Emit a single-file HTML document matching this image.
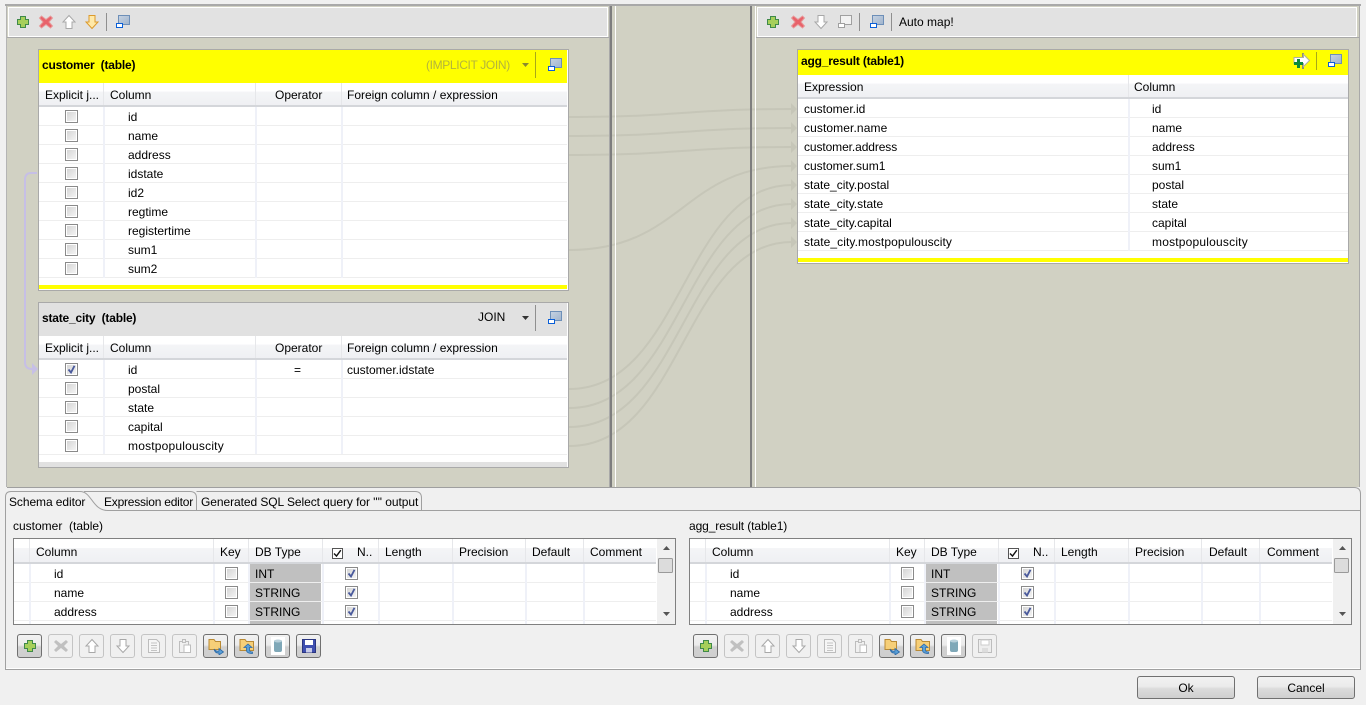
<!DOCTYPE html>
<html><head><meta charset="utf-8"><title>Map</title>
<style>
html,body{margin:0;padding:0;width:1366px;height:705px;overflow:hidden;background:#f0f0f0;font:12px/18px "Liberation Sans",sans-serif;color:#000}
div,svg{position:absolute}
.t{position:absolute;white-space:pre;line-height:18px;height:18px}
.b{font-weight:bold;letter-spacing:-.2px}
.tb{background:#e2e2e2;border:1px solid #fff;box-sizing:border-box}
.box{background:#fff;border:1px solid #a9a9a9;box-sizing:border-box}
.hd{background:linear-gradient(#fff 0,#fff 38%,#f4f5f7 40%,#eff0f3 100%);border-bottom:2px solid #d4d6da;box-sizing:border-box}
.rows{background:repeating-linear-gradient(to bottom,#fff 0,#fff 18px,#eeeeee 18px,#eeeeee 19px)}
.cs{background:#eff1f8;width:2px}
.hs{background:#e6e7ea;width:1px}
.c{width:13px;height:13px;box-sizing:border-box;border:1px solid #8a8a8a;background:linear-gradient(135deg,#d2d2d2,#f7f7f7);box-shadow:inset 0 0 0 1px #fff}
.db{background:#c0c0c0;height:18px}
.btn{width:25px;height:24px;box-sizing:border-box;border:1px solid #707070;border-radius:3px;background:linear-gradient(#f2f2f2,#ebebeb 45%,#d0d0d0 55%,#cfcfcf)}
.dis{border-color:#c4c4c4;background:#f0f0f0}
.bt{width:98px;height:23px;box-sizing:border-box;border:1px solid #707070;border-radius:3px;background:linear-gradient(#f2f2f2,#ebebeb 45%,#dcdcdc 55%,#cfcfcf);text-align:center;line-height:22px}
.sb{background:#f0f0f0}
</style></head><body>
<svg width="0" height="0" style="left:0;top:0">
<defs>
<linearGradient id="wg" x1="0" y1="0" x2="1" y2="1"><stop offset="0" stop-color="#c7d3e2"/><stop offset="1" stop-color="#9fb3cc"/></linearGradient>
<symbol id="plus" viewBox="0 0 16 16"><path d="M5.500 2.500h5v3h3v5h-3v3h-5v-3h-3v-5h3z" fill="#a6cf5a" stroke="#3f8a4a"/></symbol>
<symbol id="x" viewBox="0 0 16 16"><path d="M3.500 2L8 5.500 12.500 2l2 2L11 8l3.500 4-2 2L8 10.500 3.500 14l-2-2L5 8 1.500 4z" fill="#e8626a" stroke="#e79a9a"/></symbol>
<symbol id="up" viewBox="0 0 16 16"><path d="M8 1.500L14 8h-3v6.500H5V8H2z" fill="#fff" stroke="#a8a8a8"/></symbol>
<symbol id="dng" viewBox="0 0 16 16"><path d="M8 14.500L14 8h-3V1.500H5V8H2z" fill="#fff" stroke="#a8a8a8"/></symbol>
<symbol id="dn" viewBox="0 0 16 16"><path d="M8 14.500L14 8h-3V1.500H5V8H2z" fill="#ffe9a8" stroke="#dc9a2c"/></symbol>
<symbol id="win" viewBox="0 0 14 13"><rect x="2.500" y=".5" width="11" height="9" fill="url(#wg)" stroke="#6d8fb8"/><rect x=".5" y="8.500" width="6" height="4" fill="#fff" stroke="#0a5fd8"/></symbol>
<symbol id="wing" viewBox="0 0 14 13"><rect x="2.500" y=".5" width="11" height="9" fill="#f2f2f2" stroke="#a0a0a0"/><rect x=".5" y="8.500" width="6" height="4" fill="#fff" stroke="#a0a0a0"/></symbol>
<symbol id="tick" viewBox="0 0 13 13"><path d="M3.500 6.500L6 9.500 9.500 2.800" fill="none" stroke="#4a5a9c" stroke-width="1.800"/></symbol>
<symbol id="tickb" viewBox="0 0 13 13"><path d="M3 6.500L5.500 9 9.800 3.200" fill="none" stroke="#111" stroke-width="1.400"/></symbol>
<symbol id="xg" viewBox="0 0 16 16"><path d="M3 2l5 4 5-4 2 2-4 4 4 4-2 2-5-4-5 4-2-2 4-4-4-4z" fill="#c0c0c0"/></symbol>
<symbol id="doc" viewBox="0 0 16 16"><path d="M2.500 1.500h8l3 3v10h-11z" fill="#f6f6f6" stroke="#bdbdbd"/><path d="M5 5h6M5 7.500h6M5 10h6M5 12.500h6" stroke="#c4c4c4"/></symbol>
<symbol id="paste" viewBox="0 0 16 16"><path d="M2.500 3.500h9v11h-9z" fill="#f0f0f0" stroke="#bdbdbd"/><path d="M5.500 1.500h3v3h-3z" fill="#eee" stroke="#bdbdbd"/><path d="M7 7h6.500v7.500H7z" fill="#fff" stroke="#bdbdbd"/></symbol>
<symbol id="fo" viewBox="0 0 18 18"><path d="M2 2.500h5l1.500 2h5v8H2z" fill="#f6cf78" stroke="#b98a35"/><path d="M7 12Q9 15 12 14v-2.500l4.500 3.500-4.500 3v-2Q8 16.500 7 12z" fill="#5aa0d8" stroke="#2c6aa8" stroke-width=".8"/></symbol>
<symbol id="fi" viewBox="0 0 18 18"><path d="M2 2.500h5l1.500 2h7v9H2z" fill="#f6cf78" stroke="#b98a35"/><path d="M10 7l4 3.500h-2.500V13q0 2 3 2v1.500q-6 0-6-3.500v-2.500H6z" fill="#5aa0d8" stroke="#2c6aa8" stroke-width=".8"/></symbol>
<symbol id="cyl" viewBox="0 0 16 18"><rect x="1" y="0" width="14" height="18" fill="#fff"/><rect x="4" y="3" width="8" height="12" rx="2" fill="#7fa8b8"/><ellipse cx="8" cy="4" rx="4" ry="1.500" fill="#b8d0da"/></symbol>
<symbol id="sv" viewBox="0 0 16 16"><path d="M1.500 1.500h13v13h-13z" fill="#3f4fb0" stroke="#2a3580"/><rect x="4" y="2" width="8" height="5" fill="#fff"/><rect x="5" y="10" width="6" height="4.500" fill="#c8cce8"/></symbol>
<symbol id="svg" viewBox="0 0 16 16"><path d="M1.500 1.500h13v13h-13z" fill="#eee" stroke="#bdbdbd"/><rect x="4" y="2" width="8" height="5" fill="#fff" stroke="#ccc"/><rect x="5" y="10" width="6" height="4.500" fill="#ddd"/></symbol>
</defs></svg>

<!-- outer frame -->
<div style="left:5px;top:4px;width:1356px;height:2px;background:#a9a9a9"></div>
<div style="left:6px;top:6px;width:1px;height:481px;background:#b4b4b4"></div>
<div style="left:7px;top:6px;width:1352px;height:481px;background:#d1d1c3"></div>
<div style="left:1359px;top:6px;width:1px;height:481px;background:#a9a9a9"></div>

<!-- links -->
<svg style="left:0;top:0" width="1366" height="490" fill="none" stroke="#c6c6b8" stroke-width="2">
<path d="M569 117C683 117 683 109 792 109"/>
<path d="M569 136C683 136 683 128 792 128"/>
<path d="M569 155C683 155 683 147 792 147"/>
<path d="M569 250C683 250 683 166 792 166"/>
<path d="M569 389C683 389 683 185 792 185"/>
<path d="M569 408C683 408 683 204 792 204"/>
<path d="M569 427C683 427 683 223 792 223"/>
<path d="M569 446C683 446 683 242 792 242"/>
<g fill="#c6c6b8" stroke="none">
<path d="M791 103l6 6-6 6zM791 122l6 6-6 6zM791 141l6 6-6 6zM791 160l6 6-6 6zM791 179l6 6-6 6zM791 198l6 6-6 6zM791 217l6 6-6 6zM791 236l6 6-6 6z"/>
</g>
<path d="M37 173H31Q25 173 25 180V362Q25 369 32 369" stroke="#c6bfe6"/>
<path d="M32 363l6 6-6 6z" fill="#c6bfe6" stroke="none"/>
</svg>

<!-- sashes -->
<div style="left:609px;top:6px;width:1px;height:481px;background:#a9a9a9"></div>
<div style="left:610px;top:6px;width:2px;height:481px;background:#7e7e7e"></div>
<div style="left:615px;top:6px;width:1px;height:481px;background:#fff"></div>
<div style="left:750px;top:6px;width:2px;height:481px;background:#7e7e7e"></div>
<div style="left:755px;top:6px;width:1px;height:481px;background:#fff"></div>

<!-- toolbars -->
<div class="tb" style="left:8px;top:7px;width:600px;height:30px"></div>
<div style="left:7px;top:37px;width:602px;height:1px;background:#a9a9a9"></div>
<svg style="left:15px;top:14px" width="16" height="16"><use href="#plus"/></svg>
<svg style="left:38px;top:14px" width="16" height="16"><use href="#x"/></svg>
<svg style="left:61px;top:14px" width="16" height="16"><use href="#up"/></svg>
<svg style="left:84px;top:14px" width="16" height="16"><use href="#dn"/></svg>
<div style="left:106px;top:13px;width:1px;height:18px;background:#8f8f8f"></div>
<svg style="left:116px;top:15px" width="14" height="13"><use href="#win"/></svg>

<div class="tb" style="left:757px;top:7px;width:600px;height:30px"></div>
<div style="left:756px;top:37px;width:603px;height:1px;background:#a9a9a9"></div>
<svg style="left:765px;top:14px" width="16" height="16"><use href="#plus"/></svg>
<svg style="left:790px;top:14px" width="16" height="16"><use href="#x"/></svg>
<svg style="left:813px;top:14px" width="16" height="16"><use href="#dng"/></svg>
<svg style="left:838px;top:15px" width="14" height="13"><use href="#wing"/></svg>
<div style="left:859px;top:13px;width:1px;height:18px;background:#8f8f8f"></div>
<svg style="left:870px;top:15px" width="14" height="13"><use href="#win"/></svg>
<div style="left:891px;top:13px;width:1px;height:18px;background:#8f8f8f"></div>
<div class="t" style="left:899px;top:13px">Auto map!</div>

<!-- customer -->
<div class="box" style="left:38px;top:49px;width:531px;height:242px"></div>
<div style="left:39px;top:50px;width:528px;height:33px;background:#ff0"></div>
<div class="t b" style="left:42px;top:56px">customer  (table)</div>
<div class="t" style="left:426px;top:56px;color:#b4b43c;letter-spacing:-.35px">(IMPLICIT JOIN)</div>
<svg style="left:521px;top:62px" width="9" height="6"><path d="M1 1h7L4.500 5z" fill="#8a8a30"/></svg>
<div style="left:535px;top:52px;width:1px;height:26px;background:#a8a818"></div>
<svg style="left:548px;top:58px" width="14" height="13"><use href="#win"/></svg>
<div class="hd" style="left:39px;top:83px;width:528px;height:24px"></div>
<div class="hs" style="left:103px;top:83px;height:22px"></div><div class="hs" style="left:255px;top:83px;height:22px"></div><div class="hs" style="left:341px;top:83px;height:22px"></div>
<div class="t" style="left:45px;top:86px">Explicit j...</div><div class="t" style="left:110px;top:86px">Column</div><div class="t" style="left:275px;top:86px">Operator</div><div class="t" style="left:347px;top:86px">Foreign column / expression</div>
<div class="rows" style="left:39px;top:107px;width:528px;height:171px"></div>
<div class="cs" style="left:103px;top:107px;height:171px"></div><div class="cs" style="left:255px;top:107px;height:171px"></div><div class="cs" style="left:341px;top:107px;height:171px"></div>
<div style="left:39px;top:285px;width:528px;height:4px;background:#ff0"></div>
<div class="c" style="left:65px;top:110px"></div><div class="c" style="left:65px;top:129px"></div><div class="c" style="left:65px;top:148px"></div><div class="c" style="left:65px;top:167px"></div><div class="c" style="left:65px;top:186px"></div><div class="c" style="left:65px;top:205px"></div><div class="c" style="left:65px;top:224px"></div><div class="c" style="left:65px;top:243px"></div><div class="c" style="left:65px;top:262px"></div>
<div class="t" style="left:128px;top:108px">id</div><div class="t" style="left:128px;top:127px">name</div><div class="t" style="left:128px;top:146px">address</div><div class="t" style="left:128px;top:165px">idstate</div><div class="t" style="left:128px;top:184px">id2</div><div class="t" style="left:128px;top:203px">regtime</div><div class="t" style="left:128px;top:222px">registertime</div><div class="t" style="left:128px;top:241px">sum1</div><div class="t" style="left:128px;top:260px">sum2</div>

<!-- state_city -->
<div class="box" style="left:38px;top:302px;width:531px;height:166px"></div>
<div style="left:39px;top:303px;width:528px;height:33px;background:#e1e1e1"></div>
<div class="t b" style="left:42px;top:309px">state_city  (table)</div>
<div class="t" style="left:478px;top:308px">JOIN</div>
<svg style="left:521px;top:315px" width="9" height="6"><path d="M1 1h7L4.500 5z" fill="#333"/></svg>
<div style="left:535px;top:305px;width:1px;height:26px;background:#8f8f8f"></div>
<svg style="left:548px;top:311px" width="14" height="13"><use href="#win"/></svg>
<div class="hd" style="left:39px;top:336px;width:528px;height:24px"></div>
<div class="hs" style="left:103px;top:336px;height:22px"></div><div class="hs" style="left:255px;top:336px;height:22px"></div><div class="hs" style="left:341px;top:336px;height:22px"></div>
<div class="t" style="left:45px;top:339px">Explicit j...</div><div class="t" style="left:110px;top:339px">Column</div><div class="t" style="left:275px;top:339px">Operator</div><div class="t" style="left:347px;top:339px">Foreign column / expression</div>
<div class="rows" style="left:39px;top:360px;width:528px;height:95px"></div>
<div class="cs" style="left:103px;top:360px;height:94px"></div><div class="cs" style="left:255px;top:360px;height:94px"></div><div class="cs" style="left:341px;top:360px;height:94px"></div>
<div style="left:39px;top:462px;width:528px;height:5px;background:#e1e1e1"></div>
<div class="c" style="left:65px;top:363px"></div><svg style="left:65px;top:363px" width="13" height="13"><use href="#tick"/></svg>
<div class="c" style="left:65px;top:382px"></div><div class="c" style="left:65px;top:401px"></div><div class="c" style="left:65px;top:420px"></div><div class="c" style="left:65px;top:439px"></div>
<div class="t" style="left:128px;top:361px">id</div><div class="t" style="left:128px;top:380px">postal</div><div class="t" style="left:128px;top:399px">state</div><div class="t" style="left:128px;top:418px">capital</div><div class="t" style="left:128px;top:437px;letter-spacing:.2px">mostpopulouscity</div>
<div class="t" style="left:294px;top:361px">=</div><div class="t" style="left:347px;top:361px">customer.idstate</div>

<!-- agg_result -->
<div class="box" style="left:797px;top:49px;width:552px;height:215px"></div>
<div style="left:798px;top:50px;width:550px;height:25px;background:#ff0"></div>
<div class="t b" style="left:801px;top:52px">agg_result (table1)</div>
<svg style="left:1293px;top:52px" width="18" height="18"><path d="M10 1v16" stroke="#8f8f70" stroke-width="2"/><path d="M1 5.500h9.500V2.500L16.500 8.500l-6 6v-3H1z" fill="#fff" stroke="#b0b0a0"/><path d="M4 7h3v3h3v3H7v3H4v-3H1v-3h3z" fill="#0a8a3c"/></svg>
<div style="left:1316px;top:52px;width:1px;height:18px;background:#a8a818"></div>
<svg style="left:1328px;top:54px" width="14" height="13"><use href="#win"/></svg>
<div class="hd" style="left:798px;top:75px;width:550px;height:24px"></div>
<div class="hs" style="left:1128px;top:75px;height:22px"></div>
<div class="t" style="left:804px;top:78px">Expression</div><div class="t" style="left:1134px;top:78px">Column</div>
<div class="rows" style="left:798px;top:99px;width:550px;height:152px"></div>
<div class="cs" style="left:1128px;top:99px;height:152px"></div>
<div style="left:798px;top:258px;width:550px;height:4px;background:#ff0"></div>
<div class="t" style="left:804px;top:100px">customer.id</div><div class="t" style="left:804px;top:119px;letter-spacing:.1px">customer.name</div><div class="t" style="left:804px;top:138px;letter-spacing:-.1px">customer.address</div><div class="t" style="left:804px;top:157px">customer.sum1</div><div class="t" style="left:804px;top:176px">state_city.postal</div><div class="t" style="left:804px;top:195px">state_city.state</div><div class="t" style="left:804px;top:214px">state_city.capital</div><div class="t" style="left:804px;top:233px;letter-spacing:.08px">state_city.mostpopulouscity</div>
<div class="t" style="left:1152px;top:100px">id</div><div class="t" style="left:1152px;top:119px">name</div><div class="t" style="left:1152px;top:138px">address</div><div class="t" style="left:1152px;top:157px">sum1</div><div class="t" style="left:1152px;top:176px">postal</div><div class="t" style="left:1152px;top:195px">state</div><div class="t" style="left:1152px;top:214px">capital</div><div class="t" style="left:1152px;top:233px;letter-spacing:.2px">mostpopulouscity</div>

<!-- tab folder -->
<svg style="left:0;top:485px" width="1366" height="190" fill="none" stroke="#a0a0a0">
<path d="M7 2.500H1354Q1360.500 2.500 1360.500 9V25.500" stroke="#9f9f9f"/>
<path d="M5.500 184.500V12Q5.500 6.500 11 6.500H80C92 6.500 92 25.500 108 25.500H1360.500V184.500H5.500z"/>
<path d="M84 6.500H190Q196.500 6.500 196.500 13V25M196.500 6.500H415Q421.500 6.500 421.500 13V25"/>
<path d="M6 183.500H1360" stroke="#fff"/>
</svg>
<div class="t" style="left:9px;top:493px;letter-spacing:-.08px">Schema editor</div>
<div class="t" style="left:104px;top:493px;letter-spacing:-.22px">Expression editor</div>
<div class="t" style="left:201px;top:493px;letter-spacing:-.07px">Generated SQL Select query for '''' output</div>

<div class="t" style="left:13px;top:517px">customer  (table)</div>
<div class="t" style="left:689px;top:517px;letter-spacing:-.1px">agg_result (table1)</div>

<!-- left schema -->
<div style="left:13px;top:538px;width:663px;height:87px;box-sizing:border-box;border:1px solid #808080;background:#fff"></div>
<div class="hd" style="left:14px;top:539px;width:642px;height:25px"></div>
<div class="hs" style="left:29px;top:539px;height:23px"></div><div class="hs" style="left:213px;top:539px;height:23px"></div><div class="hs" style="left:248px;top:539px;height:23px"></div><div class="hs" style="left:322px;top:539px;height:23px"></div><div class="hs" style="left:378px;top:539px;height:23px"></div><div class="hs" style="left:452px;top:539px;height:23px"></div><div class="hs" style="left:525px;top:539px;height:23px"></div><div class="hs" style="left:583px;top:539px;height:23px"></div>
<div class="t" style="left:36px;top:543px">Column</div><div class="t" style="left:220px;top:543px">Key</div><div class="t" style="left:255px;top:543px">DB Type</div><div class="t" style="left:357px;top:543px">N..</div><div class="t" style="left:385px;top:543px">Length</div><div class="t" style="left:459px;top:543px">Precision</div><div class="t" style="left:532px;top:543px">Default</div><div class="t" style="left:590px;top:543px">Comment</div>
<div style="left:332px;top:548px;width:11px;height:11px;box-sizing:border-box;border:1px solid #555;background:#fff"></div><svg style="left:331px;top:547px" width="13" height="13"><use href="#tickb"/></svg>
<div class="rows" style="left:14px;top:564px;width:642px;height:60px"></div>
<div class="cs" style="left:29px;top:564px;height:60px"></div><div class="cs" style="left:213px;top:564px;height:60px"></div><div class="cs" style="left:248px;top:564px;height:60px"></div><div class="cs" style="left:322px;top:564px;height:60px"></div><div class="cs" style="left:378px;top:564px;height:60px"></div><div class="cs" style="left:452px;top:564px;height:60px"></div><div class="cs" style="left:525px;top:564px;height:60px"></div><div class="cs" style="left:583px;top:564px;height:60px"></div>
<div class="db" style="left:250px;top:564px;width:71px"></div><div class="db" style="left:250px;top:583px;width:71px"></div><div class="db" style="left:250px;top:602px;width:71px"></div><div class="db" style="left:250px;top:621px;width:71px;height:3px"></div>
<div class="t" style="left:54px;top:565px">id</div><div class="t" style="left:54px;top:584px">name</div><div class="t" style="left:54px;top:603px">address</div>
<div class="t" style="left:255px;top:565px">INT</div><div class="t" style="left:255px;top:584px">STRING</div><div class="t" style="left:255px;top:603px">STRING</div>
<div class="c" style="left:225px;top:567px"></div><div class="c" style="left:225px;top:586px"></div><div class="c" style="left:225px;top:605px"></div>
<div class="c" style="left:345px;top:567px"></div><svg style="left:345px;top:567px" width="13" height="13"><use href="#tick"/></svg>
<div class="c" style="left:345px;top:586px"></div><svg style="left:345px;top:586px" width="13" height="13"><use href="#tick"/></svg>
<div class="c" style="left:345px;top:605px"></div><svg style="left:345px;top:605px" width="13" height="13"><use href="#tick"/></svg>
<div class="sb" style="left:657px;top:539px;width:18px;height:85px"></div>
<svg style="left:657px;top:539px" width="18" height="85"><path d="M6 11h7l-3.500-4zM6 73h7l-3.500 4z" fill="#555"/><rect x="1.500" y="19.500" width="14" height="14" rx="1" fill="#dcdcdc" stroke="#9a9a9a"/></svg>

<!-- right schema -->
<div style="left:689px;top:538px;width:663px;height:87px;box-sizing:border-box;border:1px solid #808080;background:#fff"></div>
<div class="hd" style="left:690px;top:539px;width:642px;height:25px"></div>
<div class="hs" style="left:705px;top:539px;height:23px"></div><div class="hs" style="left:889px;top:539px;height:23px"></div><div class="hs" style="left:924px;top:539px;height:23px"></div><div class="hs" style="left:998px;top:539px;height:23px"></div><div class="hs" style="left:1054px;top:539px;height:23px"></div><div class="hs" style="left:1128px;top:539px;height:23px"></div><div class="hs" style="left:1201px;top:539px;height:23px"></div><div class="hs" style="left:1259px;top:539px;height:23px"></div>
<div class="t" style="left:712px;top:543px">Column</div><div class="t" style="left:896px;top:543px">Key</div><div class="t" style="left:931px;top:543px">DB Type</div><div class="t" style="left:1033px;top:543px">N..</div><div class="t" style="left:1061px;top:543px">Length</div><div class="t" style="left:1135px;top:543px">Precision</div><div class="t" style="left:1209px;top:543px">Default</div><div class="t" style="left:1267px;top:543px">Comment</div>
<div style="left:1008px;top:548px;width:11px;height:11px;box-sizing:border-box;border:1px solid #555;background:#fff"></div><svg style="left:1007px;top:547px" width="13" height="13"><use href="#tickb"/></svg>
<div class="rows" style="left:690px;top:564px;width:642px;height:60px"></div>
<div class="cs" style="left:705px;top:564px;height:60px"></div><div class="cs" style="left:889px;top:564px;height:60px"></div><div class="cs" style="left:924px;top:564px;height:60px"></div><div class="cs" style="left:998px;top:564px;height:60px"></div><div class="cs" style="left:1054px;top:564px;height:60px"></div><div class="cs" style="left:1128px;top:564px;height:60px"></div><div class="cs" style="left:1201px;top:564px;height:60px"></div><div class="cs" style="left:1259px;top:564px;height:60px"></div>
<div class="db" style="left:926px;top:564px;width:71px"></div><div class="db" style="left:926px;top:583px;width:71px"></div><div class="db" style="left:926px;top:602px;width:71px"></div><div class="db" style="left:926px;top:621px;width:71px;height:3px"></div>
<div class="t" style="left:730px;top:565px">id</div><div class="t" style="left:730px;top:584px">name</div><div class="t" style="left:730px;top:603px">address</div>
<div class="t" style="left:931px;top:565px">INT</div><div class="t" style="left:931px;top:584px">STRING</div><div class="t" style="left:931px;top:603px">STRING</div>
<div class="c" style="left:901px;top:567px"></div><div class="c" style="left:901px;top:586px"></div><div class="c" style="left:901px;top:605px"></div>
<div class="c" style="left:1021px;top:567px"></div><svg style="left:1021px;top:567px" width="13" height="13"><use href="#tick"/></svg>
<div class="c" style="left:1021px;top:586px"></div><svg style="left:1021px;top:586px" width="13" height="13"><use href="#tick"/></svg>
<div class="c" style="left:1021px;top:605px"></div><svg style="left:1021px;top:605px" width="13" height="13"><use href="#tick"/></svg>
<div class="sb" style="left:1333px;top:539px;width:18px;height:85px"></div>
<svg style="left:1333px;top:539px" width="18" height="85"><path d="M6 11h7l-3.500-4zM6 73h7l-3.500 4z" fill="#555"/><rect x="1.500" y="19.500" width="14" height="14" rx="1" fill="#dcdcdc" stroke="#9a9a9a"/></svg>

<!-- left buttons -->
<div class="btn" style="left:17px;top:634px"><svg style="left:4px;top:3px" width="16" height="16"><use href="#plus"/></svg></div>
<div class="btn dis" style="left:48px;top:634px"><svg style="left:4px;top:3px" width="16" height="16"><use href="#xg"/></svg></div>
<div class="btn dis" style="left:79px;top:634px"><svg style="left:4px;top:3px" width="16" height="16"><use href="#up"/></svg></div>
<div class="btn dis" style="left:110px;top:634px"><svg style="left:4px;top:3px" width="16" height="16"><use href="#dng"/></svg></div>
<div class="btn dis" style="left:141px;top:634px"><svg style="left:4px;top:3px" width="16" height="16"><use href="#doc"/></svg></div>
<div class="btn dis" style="left:172px;top:634px"><svg style="left:4px;top:3px" width="16" height="16"><use href="#paste"/></svg></div>
<div class="btn" style="left:203px;top:634px"><svg style="left:3px;top:2px" width="18" height="18"><use href="#fo"/></svg></div>
<div class="btn" style="left:234px;top:634px"><svg style="left:3px;top:2px" width="18" height="18"><use href="#fi"/></svg></div>
<div class="btn" style="left:265px;top:634px"><svg style="left:4px;top:2px" width="16" height="18"><use href="#cyl"/></svg></div>
<div class="btn" style="left:296px;top:634px"><svg style="left:4px;top:3px" width="16" height="16"><use href="#sv"/></svg></div>

<!-- right buttons -->
<div class="btn" style="left:693px;top:634px"><svg style="left:4px;top:3px" width="16" height="16"><use href="#plus"/></svg></div>
<div class="btn dis" style="left:724px;top:634px"><svg style="left:4px;top:3px" width="16" height="16"><use href="#xg"/></svg></div>
<div class="btn dis" style="left:755px;top:634px"><svg style="left:4px;top:3px" width="16" height="16"><use href="#up"/></svg></div>
<div class="btn dis" style="left:786px;top:634px"><svg style="left:4px;top:3px" width="16" height="16"><use href="#dng"/></svg></div>
<div class="btn dis" style="left:817px;top:634px"><svg style="left:4px;top:3px" width="16" height="16"><use href="#doc"/></svg></div>
<div class="btn dis" style="left:848px;top:634px"><svg style="left:4px;top:3px" width="16" height="16"><use href="#paste"/></svg></div>
<div class="btn" style="left:879px;top:634px"><svg style="left:3px;top:2px" width="18" height="18"><use href="#fo"/></svg></div>
<div class="btn" style="left:910px;top:634px"><svg style="left:3px;top:2px" width="18" height="18"><use href="#fi"/></svg></div>
<div class="btn" style="left:941px;top:634px"><svg style="left:4px;top:2px" width="16" height="18"><use href="#cyl"/></svg></div>
<div class="btn dis" style="left:972px;top:634px"><svg style="left:4px;top:3px" width="16" height="16"><use href="#svg"/></svg></div>

<div class="bt" style="left:1137px;top:676px">Ok</div>
<div class="bt" style="left:1257px;top:676px">Cancel</div>
</body></html>
